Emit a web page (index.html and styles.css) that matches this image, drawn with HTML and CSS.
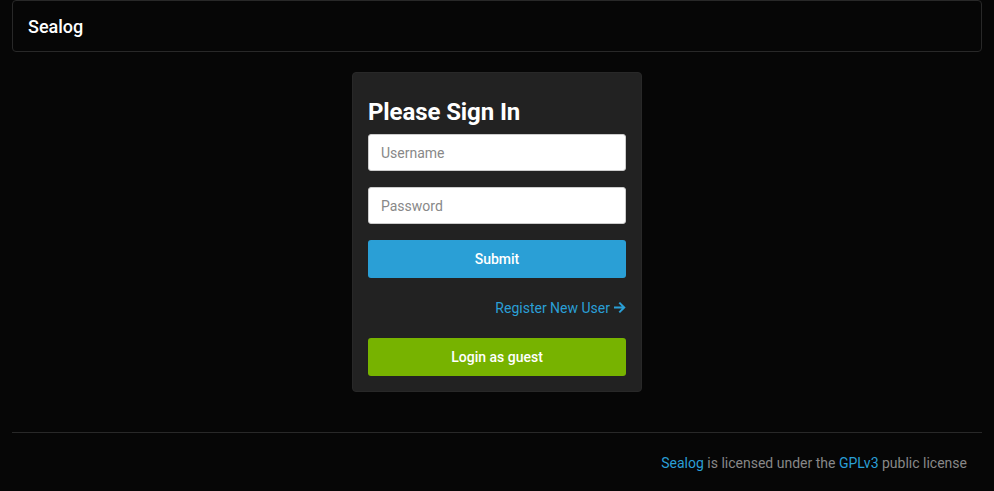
FILE: index.html
```html
<!DOCTYPE html>
<html>
<head>
<meta charset="utf-8">
<link rel="stylesheet" href="styles.css">
</head>
<body>
<div class="container">
  <nav class="navbar"><span class="brand">Sealog</span></nav>
  <div class="card">
    <h3 class="card-title">Please Sign In</h3>
    <form class="form">
      <input class="input" type="text" placeholder="Username">
      <input class="input" type="password" placeholder="Password">
      <button class="btn btn-primary" type="button">Submit</button>
      <div class="register"><a href="#" class="link">Register New User<svg class="arrow" viewBox="0 0 13 13" width="13" height="13"><path d="M1 6.5h10M6.3 1.6L11.2 6.5 6.3 11.4" fill="none" stroke="currentColor" stroke-width="2"/></svg></a></div>
      <button class="btn btn-success" type="button">Login as guest</button>
    </form>
  </div>
  <hr class="rule">
  <footer class="footer"><a href="#" class="link">Sealog</a> is licensed under the <a href="#" class="link">GPLv3</a> public license</footer>
</div>
</body>
</html>
```
FILE: styles.css
```css
* { box-sizing: border-box; }
html, body { margin: 0; padding: 0; background: #060606; }
body { font-family: Roboto, "Liberation Sans", sans-serif; font-size: 14px; color: #888; }
.container { width: 970px; margin: 0 auto; }
.navbar { height: 52px; border: 1px solid #282828; border-radius: 4px; background: #060606; display: flex; align-items: center; padding: 0 15px; margin-bottom: 20px; }
.brand { color: #fff; font-size: 18px; font-weight: 500; padding-top: 1px; }
.card { width: 290px; margin: 0 auto; background: #222; border: 1px solid #282828; border-radius: 4px; padding: 26px 15px 15px; }
.card-title { margin: 0 0 9px; color: #fff; font-size: 24px; font-weight: 700; line-height: 26px; letter-spacing: -0.1px; }
.form { display: flex; flex-direction: column; }
.input { height: 37px; border: 1px solid #ccc; border-radius: 3px; background: #fff; padding: 0 12px; font-family: inherit; font-size: 14px; color: #333; margin-bottom: 16px; outline: none; }
.input::placeholder { color: #888; }
.btn { height: 38px; border: none; border-radius: 3px; color: #fff; font-family: inherit; font-size: 14px; font-weight: 500; cursor: pointer; }
.btn-primary { background: #2a9fd6; }
.btn-success { background: #77b300; }
.register { text-align: right; line-height: 20px; margin: 20px 0 20px; }
.link { color: #2a9fd6; text-decoration: none; }
.arrow { vertical-align: -1px; margin-left: 3px; }
.rule { border: 0; border-top: 1px solid #282828; margin: 40px 0 0; }
.footer { text-align: right; padding: 20px 15px 0; line-height: 20px; }
```
